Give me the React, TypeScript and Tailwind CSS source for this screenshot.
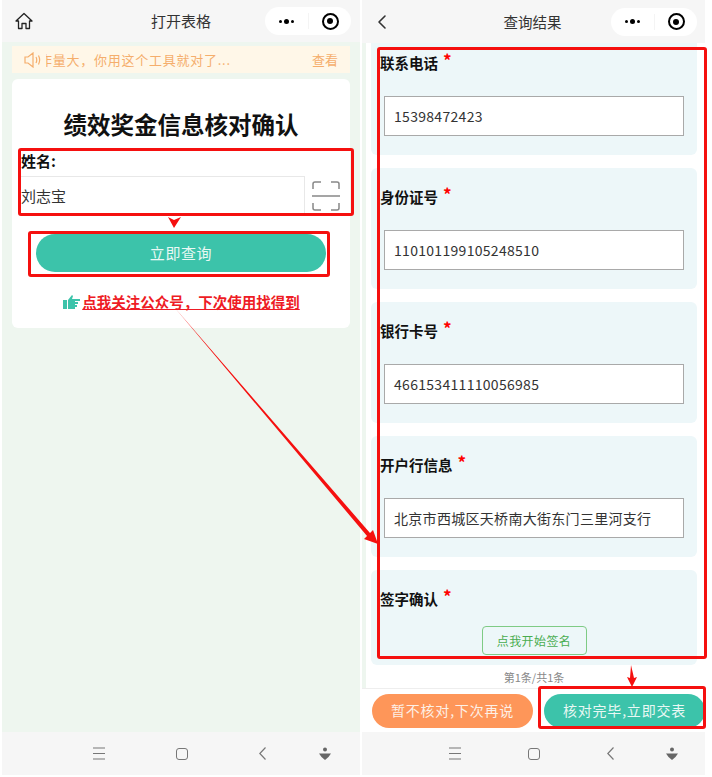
import { ChevronLeft } from "lucide-react";

const cjk = "font-['Noto_Sans_CJK_SC','Noto_Sans',sans-serif]";

const Capsule = () => {
  return (
    <div className="flex items-center w-[86px] h-[28px] bg-white rounded-full">
      <div className="w-[43px] flex justify-center items-center gap-[2px]">
        <span className="w-[3px] h-[3px] rounded-full bg-black" />
        <span className="w-[5px] h-[5px] rounded-full bg-black" />
        <span className="w-[3px] h-[3px] rounded-full bg-black" />
      </div>
      <div className="w-px h-[16px] bg-[#f4f4f4]" />
      <div className="flex-1 flex justify-center">
        <span className="w-[17px] h-[17px] rounded-full border-2 border-black flex items-center justify-center">
          <span className="w-[6px] h-[6px] rounded-full bg-black" />
        </span>
      </div>
    </div>
  );
};

const BottomNav = ({ className, lastClass }: { className: string; lastClass: string }) => {
  return (
    <div className={`h-[43px] bg-[#f6f6f6] flex items-center shrink-0 ${className}`}>
      <svg width="12" height="13" viewBox="0 0 12 13" fill="none" stroke="#777" strokeWidth="1.2">
        <path d="M0 1h12M0 6.5h12M0 12h12" />
      </svg>
      <div className="w-[12px] h-[12px] border-[1.5px] border-[#777] rounded-[3px]" />
      <svg width="7" height="13" viewBox="0 0 7 13" fill="none" stroke="#777" strokeWidth="1.2">
        <path d="M6.5 0.5 0.8 6.5l5.7 6" />
      </svg>
      <svg width="12" height="14" viewBox="0 0 12 14" fill="#666" className={lastClass}>
        <circle cx="6" cy="2.5" r="2" />
        <path d="M0 6.5h12L9.5 10 6 13 2.5 10z" />
      </svg>
    </div>
  );
};

const Required = () => {
  return <span className="text-[#f00] ml-[5px] -mt-[3px] text-[17px] leading-[20px] font-bold">*</span>;
};

const Field = ({ label, value, first }: { label: string; value: string; first?: boolean }) => {
  return (
    <div className={`w-[326px] h-[121px] bg-[#edf7f9] rounded-md mb-[13px] px-[13px] pt-[19px] ${first ? "-mt-[9px]" : ""}`}>
      <div className="-ml-[4px] text-[14.5px] leading-[20px] font-bold text-[#111] flex">
        {label}
        <Required />
      </div>
      <div className="mt-[23px] w-[300px] h-[40px] bg-white border border-[#a9a9a9] flex items-center px-[9px] text-[14px] text-[#333] tracking-[0.3px]">
        {value}
      </div>
    </div>
  );
};

const Box = ({ className }: { className: string }) => {
  return <div className={`absolute border-[3px] border-[#f5100f] rounded-[3px] ${className}`} />;
};

const App = () => {
  return (
    <div className={`relative flex w-[712px] h-[777px] bg-white overflow-hidden ${cjk}`}>
      {/* left phone */}
      <div className="ml-[2px] w-[358px] h-[775px] flex flex-col bg-[#eef6ef]">
        <div className="h-[42px] bg-[#f6f6f6] flex items-center pl-[13px] pr-[9px] shrink-0">
          <svg width="18" height="18" viewBox="0 0 18 18" fill="none" stroke="#222" strokeWidth="1.3" strokeLinejoin="round">
            <path d="M1 9 9 1.5 17 9h-2.5v7.5h-3.5v-5H7v5H3.5V9z" />
          </svg>
          <div className="flex-1 text-center text-[15px] text-[#333] pl-[64px]">打开表格</div>
          <Capsule />
        </div>
        <div className="mx-[10px] mt-[4px] h-[27px] bg-[#fff7e8] flex items-center pl-[12px] pr-[12px] text-[13px] text-[#f5ae6c]">
          <svg width="18" height="16" viewBox="0 0 18 16" fill="none" stroke="#f5ae6c" strokeWidth="1.2" className="shrink-0">
            <path d="M1 5h3l5-4v14l-5-4H1zM12 5c1 2 1 4 0 6M14.5 3.5c1.5 3 1.5 6 0 9" />
          </svg>
          <div className="ml-[4px] w-[190px] overflow-hidden whitespace-nowrap tracking-[0.75px]">
            <span className="-ml-[7px] inline-block">作量大，你用这个工具就对了...</span>
          </div>
          <span className="ml-auto">查看</span>
        </div>
        <div className="mx-[10px] mt-[6px] h-[249px] bg-white rounded-md flex flex-col">
          <h1 className="mt-[28px] text-center text-[23.5px] leading-[34px] font-bold text-[#111]">绩效奖金信息核对确认</h1>
          <div className="pl-[9px] mt-[9px] text-[15px] leading-[22px] font-bold text-[#111]">姓名:</div>
          <div className="flex ml-[9px] mt-[4px] h-[39px]">
            <div className="w-[284px] bg-white border-t border-r border-[#e8e8e8] flex items-center text-[15px] text-[#333]">刘志宝</div>
            <div className="flex-1 flex items-center pl-[7px]">
              <svg width="28" height="30" viewBox="0 0 28 30" fill="none" stroke="#888" strokeWidth="1.5">
                <path d="M1 8V3q0-2 2-2h6M19 1h6q2 0 2 2v5M0 15h28M1 22v5q0 2 2 2h6M19 29h6q2 0 2-2v-5" />
              </svg>
            </div>
          </div>
          <div className="mx-[24px] mt-[19px] h-[38px] rounded-full bg-[#3cc3aa] flex items-center justify-center text-[15px] tracking-[0.6px] text-[#e9f8f4]">立即查询</div>
          <div className="mt-[20px] flex justify-center items-center pl-[1px]">
            <svg width="17" height="14" viewBox="0 0 17 14" fill="#3cc3aa" className="mr-[2px]">
              <path d="M0 5h4v9H0zM5 5l4-5 1 1-1 3h8v2h-5v1h3v2h-3v1h2v2h-2v2H5z" />
            </svg>
            <span className="text-[14.5px] leading-[20px] font-bold text-[#ee1c25] underline">点我关注公众号，下次使用找得到</span>
          </div>
        </div>
        <div className="flex-1" />
        <BottomNav className="pl-[91px] gap-[71px]" lastClass="-ml-[18px]" />
      </div>

      {/* right phone */}
      <div className="ml-[2px] w-[343px] h-[775px] flex flex-col bg-white">
        <div className="h-[43px] bg-[#f6f6f6] flex items-center pl-[8px] pr-[8px] shrink-0">
          <ChevronLeft size={24} strokeWidth={1.6} color="#333" />
          <div className="flex-1 text-center text-[14.5px] text-[#333] pl-[60px]">查询结果</div>
          <Capsule />
        </div>
        <div className="relative flex-1 overflow-hidden border-l-[4px] border-[#eef6ef] pl-[5px]">
          <Field first label="联系电话" value="15398472423" />
          <Field label="身份证号" value="110101199105248510" />
          <Field label="银行卡号" value="466153411110056985" />
          <Field label="开户行信息" value="北京市西城区天桥南大街东门三里河支行" />
          <div className="w-[326px] h-[95px] bg-[#edf7f9] rounded-md px-[9px] pt-[19px]">
            <div className="text-[14.5px] leading-[20px] font-bold text-[#111] flex">
              签字确认
              <Required />
            </div>
            <div className="mx-auto mt-[17px] w-[105px] h-[29px] border border-[#7fcb85] rounded-[4px] flex items-center justify-center text-[12px] tracking-[0.4px] text-[#49ad50]">点我开始签名</div>
          </div>
          <div className="w-[326px] text-center text-[11px] leading-[24px] text-[#888]">第1条/共1条</div>
        </div>
        <div className="h-[44px] bg-white border-t border-[#eeeeee] flex items-center gap-[11px] pl-[10px] shrink-0">
          <div className="w-[161px] h-[34px] rounded-full bg-[#fe9659] flex items-center justify-center text-[14px] tracking-[0.8px] text-[#fdf0e6]">暂不核对,下次再说</div>
          <div className="w-[161px] h-[34px] rounded-full bg-[#3cc3aa] flex items-center justify-center text-[14px] tracking-[0.8px] text-[#e9f8f4]">核对完毕,立即交表</div>
        </div>
        <BottomNav className="pl-[87px] gap-[67px]" lastClass="-ml-[15px]" />
      </div>

      {/* red annotations */}
      <Box className="left-[18px] top-[148px] w-[336px] h-[68px]" />
      <Box className="left-[28px] top-[231px] w-[302px] h-[46px]" />
      <Box className="left-[377px] top-[47px] w-[330px] h-[612px]" />
      <Box className="left-[538px] top-[686px] w-[168px] h-[43px]" />
      <svg width="712" height="777" viewBox="0 0 712 777" className="absolute left-0 top-0 pointer-events-none">
        <path d="M168 217l6 3 7-3-7 11z" fill="#f5100f" />
        <path d="M631 665l3 13 3-1-5 10-5-10 3 1z" fill="#f5100f" />
        <path d="M175 308 370 533l3-3 5 14-14-5 3-3z" fill="#f5100f" />
      </svg>
    </div>
  );
};

export default App;
